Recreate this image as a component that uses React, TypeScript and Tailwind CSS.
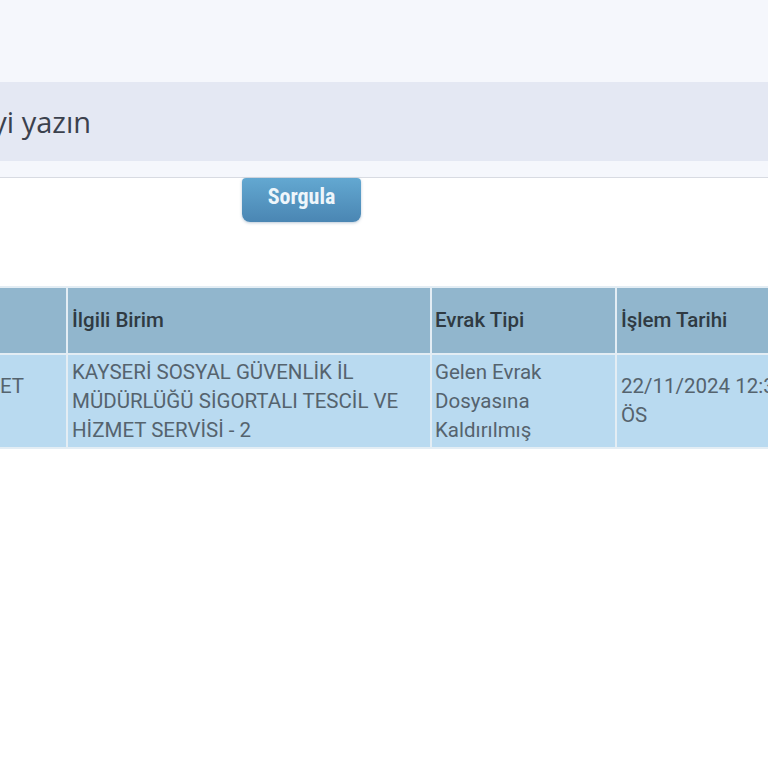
import React from "react";

export default function App() {
  const cellBase = "overflow-hidden";
  return (
    <div className="w-[768px] h-[768px] overflow-hidden bg-white" style={{ fontFamily: "Roboto, 'Noto Sans', sans-serif" }}>
      {/* top search area */}
      <div className="bg-[#f5f7fc] border-b border-[#d8dbe2]">
        <div className="h-[82px]" />
        <div className="h-[79px] bg-[#e4e8f3] flex items-center overflow-hidden">
          <div className="w-[91px] shrink-0 flex justify-end">
            <span
              className="whitespace-nowrap text-[29px] text-[#3b414d] leading-none"
              style={{ fontFamily: "'Open Sans', sans-serif" }}
            >
              Aranacak kelimeyi yazın
            </span>
          </div>
        </div>
        <div className="h-[16px]" />
      </div>

      {/* button */}
      <div className="pl-[242px]">
        <button
          className="w-[119px] h-[44px] rounded-b-[8px] rounded-t-[4px] bg-gradient-to-b from-[#63a8d1] to-[#4a86b3] text-[#eef6fb] text-[22px] font-bold leading-none pb-[6px] shadow-[0_1px_3px_rgba(60,100,140,0.35)]"
          style={{ fontFamily: "'Liberation Sans Narrow', 'Roboto Condensed', Roboto, sans-serif" }}
        >
          Sorgula
        </button>
      </div>

      {/* table */}
      <div className="mt-[64px] overflow-hidden">
        <div className="grid grid-cols-[66px_362px_183px_220px] gap-[2px] bg-[#e3edf4] py-[2px] w-[900px] text-[20.5px]">
          {/* header */}
          <div className="h-[65px] bg-[#91b6cd]" />
          <div className="h-[65px] bg-[#91b6cd] flex items-center pl-[4px] font-medium text-[#2f3a42]">İlgili Birim</div>
          <div className="h-[65px] bg-[#91b6cd] flex items-center pl-[3px] font-medium text-[#2f3a42]">Evrak Tipi</div>
          <div className="h-[65px] bg-[#91b6cd] flex items-center pl-[4px] font-medium text-[#2f3a42]">İşlem Tarihi</div>
          {/* data row */}
          <div className={`${cellBase} h-[92px] bg-[#b9daf0] flex flex-col justify-center text-[#55636e] leading-[29px]`}>
            <span>ET</span>
            <span>&nbsp;</span>
          </div>
          <div className={`${cellBase} h-[92px] bg-[#b9daf0] flex items-center pl-[4px] pr-[6px] text-[#55636e] leading-[29px]`}>
            KAYSERİ SOSYAL GÜVENLİK İL MÜDÜRLÜĞÜ SİGORTALI TESCİL VE HİZMET SERVİSİ - 2
          </div>
          <div className={`${cellBase} h-[92px] bg-[#b9daf0] flex items-center pl-[3px] pr-[40px] text-[#55636e] leading-[29px]`}>
            Gelen Evrak Dosyasına Kaldırılmış
          </div>
          <div className={`${cellBase} h-[92px] bg-[#b9daf0] flex items-center pl-[4px] text-[#55636e] leading-[29px]`}>
            <div>
              <div className="whitespace-nowrap">22/11/2024 12:30:15</div>
              <div>ÖS</div>
            </div>
          </div>
        </div>
      </div>
    </div>
  );
}
